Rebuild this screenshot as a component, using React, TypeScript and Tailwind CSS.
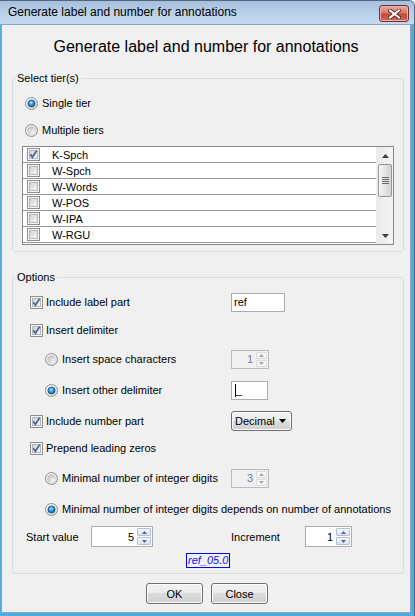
import clsx from 'clsx';

const tiers = ['K-Spch', 'W-Spch', 'W-Words', 'W-POS', 'W-IPA', 'W-RGU', ''];

const winButton =
  'bg-[linear-gradient(#f2f2f2,#ebebeb_50%,#dddddd_50%,#cfcfcf)] border border-[#707070] rounded-[3px] shadow-[inset_0_0_0_1px_#fbfbfb]';

function CheckBox({ checked }: { checked?: boolean }) {
  return (
    <svg width="13" height="13" viewBox="0 0 13 13" className="shrink-0">
      <defs>
        <linearGradient id="cbIn" x1="0" y1="0" x2="1" y2="1">
          <stop offset="0" stopColor="#cdd1d6" />
          <stop offset="1" stopColor="#f7f7f7" />
        </linearGradient>
      </defs>
      <rect x="0.5" y="0.5" width="12" height="12" fill="#f5f5f5" stroke="#8e8f8f" />
      <rect x="2.5" y="2.5" width="8" height="8" fill="url(#cbIn)" stroke="#b4b9be" />
      {checked && <path d="M3.3 6.3 L5.4 9.3 L9.7 2.6" fill="none" stroke="#4c5f8f" strokeWidth="1.7" />}
    </svg>
  );
}

function Radio({ on }: { on?: boolean }) {
  return (
    <svg width="13" height="13" viewBox="0 0 13 13" className="shrink-0">
      <defs>
        <radialGradient id="rbOut" cx="0.35" cy="0.3" r="0.8">
          <stop offset="0" stopColor="#ffffff" />
          <stop offset="1" stopColor="#d9d9d9" />
        </radialGradient>
        <radialGradient id="rbIn" cx="0.7" cy="0.75" r="0.9">
          <stop offset="0" stopColor="#f4f4f4" />
          <stop offset="1" stopColor="#b8b8b8" />
        </radialGradient>
        <radialGradient id="rbDot" cx="0.45" cy="0.4" r="0.7">
          <stop offset="0" stopColor="#b4e8ff" />
          <stop offset="0.45" stopColor="#2d91d8" />
          <stop offset="1" stopColor="#0b4780" />
        </radialGradient>
      </defs>
      <circle cx="6.5" cy="6.5" r="6" fill="url(#rbOut)" stroke="#8e8f8f" />
      {on ? (
        <circle cx="6.5" cy="6.5" r="3.6" fill="url(#rbDot)" stroke="#1d4a78" strokeWidth="0.7" />
      ) : (
        <circle cx="6.5" cy="6.5" r="4.2" fill="url(#rbIn)" />
      )}
    </svg>
  );
}

function Tri({ up, color, w = 5, h = 3 }: { up?: boolean; color: string; w?: number; h?: number }) {
  return (
    <svg width={w} height={h} viewBox={`0 0 ${w} ${h}`} className="shrink-0">
      <path d={up ? `M0 ${h} L${w / 2} 0 L${w} ${h}Z` : `M0 0 L${w / 2} ${h} L${w} 0Z`} fill={color} />
    </svg>
  );
}

function Spinner({
  value,
  className,
  disabled,
  btnClass,
}: {
  value: string;
  className: string;
  disabled?: boolean;
  btnClass: string;
}) {
  return (
    <div
      className={clsx(
        'flex border p-[1px]',
        disabled ? 'border-[#b8bcc0] bg-[#f0f0f0] text-[#6f7a8c]' : 'border-[#abadb3] bg-white',
        className
      )}
    >
      <div className="flex-1 flex items-center justify-end pr-[3px]">{value}</div>
      <div className={clsx('flex flex-col gap-[1px]', btnClass)}>
        {[true, false].map((up) => (
          <div
            key={String(up)}
            className={clsx(
              'flex-1 flex items-center justify-center rounded-[1px] border',
              disabled
                ? 'border-[#dcdcdc] bg-[#f4f4f4]'
                : 'border-[#b3c0d2] bg-[linear-gradient(#f6f8fb,#dbe4ef)]'
            )}
          >
            <Tri up={up} color={disabled ? '#a9a9a9' : '#4d6a96'} />
          </div>
        ))}
      </div>
    </div>
  );
}

function Scrollbar() {
  return (
    <div className="w-[17px] flex flex-col bg-[linear-gradient(90deg,#e9e9e9,#f5f5f5)] border-l border-[#eeeeee]">
      <div className="h-[17px] flex items-center justify-center">
        <Tri up color="#3d3d3d" w={7} h={4} />
      </div>
      <div className="mx-[1px] h-[33px] rounded-[2px] border border-[#979797] bg-[linear-gradient(90deg,#f6f6f6,#e4e4e4_50%,#d3d3d3)] flex flex-col items-center justify-center gap-[1px]">
        {[0, 1, 2, 3].map((i) => (
          <div key={i} className="w-[7px] h-[1px] bg-[#6b6b6b]" />
        ))}
      </div>
      <div className="flex-1" />
      <div className="h-[17px] flex items-center justify-center">
        <Tri color="#3d3d3d" w={7} h={4} />
      </div>
    </div>
  );
}

export default function App() {
  return (
    <div className="w-[415px] h-[616px] bg-white font-['Liberation_Sans',Arial,sans-serif] text-[11px] leading-[14px] text-black">
      <div className="w-full h-full flex flex-col bg-[#4aaee3] border-t border-r border-[#56687d] rounded-tr-[6px] overflow-hidden">
        {/* title bar */}
        <div className="h-[23px] flex items-start bg-[linear-gradient(#a6bfdd,#bcd2ea_60%,#c5d9ef)] pl-[8px] pr-[5px]">
          <span className="mt-[4px] text-[12px] leading-[14px] text-black">Generate label and number for annotations</span>
          <div className="ml-auto mt-[4px] w-[30px] h-[17px] rounded-[3px] border border-[#6b3330] bg-[linear-gradient(#e9aa9b,#d7786a_45%,#c4493b_55%,#cf6a57)] flex items-center justify-center shadow-[inset_0_0_0_1px_#eeb3a8]">
            <svg width="13" height="10" viewBox="0 0 13 10">
              <path d="M2 1.5 L11 8.5 M11 1.5 L2 8.5" stroke="#4a2422" strokeWidth="3.6" strokeLinecap="square" />
              <path d="M2 1.5 L11 8.5 M11 1.5 L2 8.5" stroke="#ffffff" strokeWidth="2" strokeLinecap="square" />
            </svg>
          </div>
        </div>

        {/* frame + client area */}
        <div className="flex-1 flex flex-col pl-[1px] pr-[3px] pb-[3px]">
          <div className="flex-1 flex flex-col bg-[#f0f0f0] border border-[#8ea5be]">
            <h1 className="pt-[12px] text-center text-[16px] leading-[19px] font-normal">
              Generate label and number for annotations
            </h1>

            <fieldset className="ml-[10px] mt-[15px] w-[392px] border border-[#d5dfe5] rounded-[3px]">
              <legend className="ml-[2px] px-[2px] leading-[14px]">Select tier(s)</legend>
              <div className="px-[9px] pt-[10px] pb-[6px]">
                <div className="h-[16px] ml-[3px] flex items-center gap-[4px]">
                  <Radio on />
                  <span>Single tier</span>
                </div>
                <div className="h-[16px] mt-[11px] ml-[3px] flex items-center gap-[4px]">
                  <Radio />
                  <span>Multiple tiers</span>
                </div>
                <div className="mt-[8px] h-[99px] border border-[#828790] bg-white flex overflow-hidden">
                  <div className="flex-1 overflow-hidden">
                    {tiers.map((t, i) => (
                      <div key={i} className="h-[16px] border-b border-[#999999] flex items-center pl-[4px]">
                        <CheckBox checked={i === 0} />
                        {t && <span className="ml-[12px]">{t}</span>}
                      </div>
                    ))}
                  </div>
                  <Scrollbar />
                </div>
              </div>
            </fieldset>

            <fieldset className="ml-[10px] mt-[18px] w-[392px] border border-[#d5dfe5] rounded-[3px]">
              <legend className="ml-[2px] px-[2px] leading-[14px]">Options</legend>
              <div className="pt-[8px] pb-[5px] whitespace-nowrap">
                <div className="h-[20px] flex items-center pl-[17px]">
                  <div className="w-[201px] flex items-center gap-[3px]">
                    <CheckBox checked />
                    <span>Include label part</span>
                  </div>
                  <div className="w-[54px] h-[19px] border border-[#abadb3] bg-white flex items-center pl-[2px]">ref</div>
                </div>

                <div className="mt-[8px] h-[20px] flex items-center pl-[17px] gap-[3px]">
                  <CheckBox checked />
                  <span>Insert delimiter</span>
                </div>

                <div className="mt-[9px] h-[20px] flex items-center pl-[32px]">
                  <div className="w-[186px] flex items-center gap-[4px]">
                    <Radio />
                    <span>Insert space characters</span>
                  </div>
                  <Spinner value="1" disabled className="w-[38px] h-[19px]" btnClass="w-[11px]" />
                </div>

                <div className="mt-[11px] h-[20px] flex items-center pl-[32px]">
                  <div className="w-[186px] flex items-center gap-[4px]">
                    <Radio on />
                    <span>Insert other delimiter</span>
                  </div>
                  <div className="w-[37px] h-[19px] border border-[#abadb3] bg-white flex items-center pl-[3px]">
                    <span className="h-[13px] border-l border-black" />
                    <span className="leading-[13px]">_</span>
                  </div>
                </div>

                <div className="mt-[11px] h-[20px] flex items-center pl-[17px]">
                  <div className="w-[201px] flex items-center gap-[3px]">
                    <CheckBox checked />
                    <span>Include number part</span>
                  </div>
                  <div className={clsx(winButton, 'w-[61px] h-[20px] flex items-center pl-[3px] pr-[5px]')}>
                    <span>Decimal</span>
                    <span className="ml-auto">
                      <Tri color="#000000" w={7} h={4} />
                    </span>
                  </div>
                </div>

                <div className="mt-[7px] h-[20px] flex items-center pl-[17px] gap-[3px]">
                  <CheckBox checked />
                  <span>Prepend leading zeros</span>
                </div>

                <div className="mt-[10px] h-[20px] flex items-center pl-[32px]">
                  <div className="w-[186px] flex items-center gap-[4px]">
                    <Radio />
                    <span>Minimal number of integer digits</span>
                  </div>
                  <Spinner value="3" disabled className="w-[38px] h-[19px]" btnClass="w-[11px]" />
                </div>

                <div className="mt-[11px] h-[20px] flex items-center pl-[32px] gap-[4px]">
                  <Radio on />
                  <span>Minimal number of integer digits depends on number of annotations</span>
                </div>

                <div className="mt-[7px] h-[21px] flex items-center pl-[13px]">
                  <span className="w-[65px]">Start value</span>
                  <Spinner value="5" className="w-[62px] h-[21px]" btnClass="w-[14px]" />
                  <span className="w-[78px]" />
                  <span className="w-[74px]">Increment</span>
                  <Spinner value="1" className="w-[47px] h-[21px]" btnClass="w-[14px]" />
                </div>

                <div className="mt-[6px] mx-auto w-[44px] h-[15px] border border-[#0000ff] text-[#1010ff] italic leading-[13px] pl-[1px] overflow-hidden">
                  ref_05.0
                </div>
              </div>
            </fieldset>

            <div className="mt-[9px] flex justify-center gap-[8px] pl-[2px]">
              <button className={clsx(winButton, 'w-[57px] h-[21px] text-[11px] leading-[14px]')}>OK</button>
              <button className={clsx(winButton, 'w-[57px] h-[21px] text-[11px] leading-[14px]')}>Close</button>
            </div>
          </div>
        </div>
      </div>
    </div>
  );
}
